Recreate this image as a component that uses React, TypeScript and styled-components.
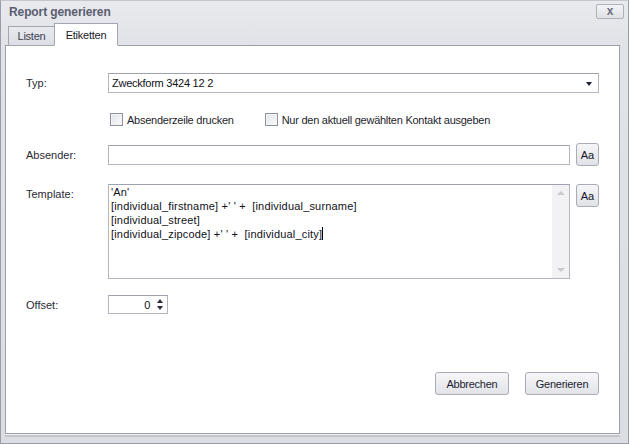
import React from 'react';
import styled, { createGlobalStyle } from 'styled-components';

const GlobalStyle = createGlobalStyle`
  html, body {
    margin: 0;
    padding: 0;
    background: #ffffff;
  }
  body {
    font-family: 'Liberation Sans', Arial, sans-serif;
    font-size: 11px;
    letter-spacing: -0.25px;
    color: #1e1e2a;
  }
`;

const Window = styled.div`
  width: 629px;
  height: 444px;
  box-sizing: border-box;
  display: flex;
  flex-direction: column;
  background: linear-gradient(#e9eaee, #e2e3e8 40px, #dcdde3);
  border: 1px solid #9a9da9;
  border-top-color: #c4c6cf;
  padding: 0 8px 9px 4px;
`;

const TitleBar = styled.div`
  height: 22px;
  display: flex;
  align-items: center;
  justify-content: space-between;
  padding-left: 4px;
  margin-right: -4px;
`;

const Title = styled.div`
  font-weight: bold;
  font-size: 12px;
  letter-spacing: -0.1px;
  color: #5a5d70;
`;

const CloseButton = styled.div`
  width: 26px;
  height: 13px;
  margin-top: -2px;
  border: 1px solid #aeb1bc;
  border-radius: 2px;
  background: linear-gradient(#f3f4f7, #dfe1e6);
  display: flex;
  align-items: center;
  justify-content: center;
  color: #6c6f7e;
  font-size: 12px;
  font-weight: bold;
  line-height: 1;
`;

const TabStrip = styled.div`
  display: flex;
  align-items: flex-end;
  height: 23px;
  padding-left: 3px;
  margin-bottom: -1px;
  position: relative;
  z-index: 1;
`;

const Tab = styled.div<{ $active?: boolean }>`
  box-sizing: border-box;
  height: ${(p) => (p.$active ? '23px' : '20px')};
  width: ${(p) => (p.$active ? '64px' : '47px')};
  margin-left: ${(p) => (p.$active ? '-1px' : '0')};
  display: flex;
  align-items: center;
  justify-content: center;
  background: ${(p) => (p.$active ? '#ffffff' : 'linear-gradient(#e9eaee, #dcdee4)')};
  border: 1px solid #a3a6b2;
  border-bottom-color: ${(p) => (p.$active ? '#ffffff' : '#a3a6b2')};
  color: ${(p) => (p.$active ? '#1b1b2b' : '#3a3d50')};
`;

const Panel = styled.div`
  flex: 1;
  background: #ffffff;
  border: 1px solid #9c9fab;
  box-shadow: 0 1px 0 #f0f0f3, 0 3px 0 #c2c4cd;
  display: flex;
  flex-direction: column;
  padding: 27px 20px 0 20px;
  box-sizing: border-box;
`;

const Row = styled.div<{ $gap?: number }>`
  display: flex;
  align-items: flex-start;
  margin-top: ${(p) => p.$gap ?? 0}px;
`;

const Label = styled.div<{ $h?: number }>`
  width: 82px;
  flex-shrink: 0;
  height: ${(p) => p.$h ?? 20}px;
  line-height: ${(p) => p.$h ?? 20}px;
  color: #2a2a36;
  letter-spacing: 0;
`;

const Input = styled.div<{ $w: number; $h?: number }>`
  box-sizing: border-box;
  width: ${(p) => p.$w}px;
  height: ${(p) => p.$h ?? 20}px;
  border: 1px solid #b4b7c2;
  border-top-color: #9fa2ae;
  background: #ffffff;
  display: flex;
  align-items: center;
  position: relative;
  padding-left: 3px;
  color: #111118;
`;

const DropArrow = styled.div`
  position: absolute;
  right: 6px;
  top: 8px;
  width: 0;
  height: 0;
  border-left: 3.5px solid transparent;
  border-right: 3.5px solid transparent;
  border-top: 4px solid #1d1f33;
`;

const CheckGroup = styled.div<{ $gapAfter?: number }>`
  display: flex;
  align-items: center;
  height: 13px;
  gap: 4px;
  margin-left: 2px;
  margin-right: ${(p) => p.$gapAfter ?? 0}px;
`;

const Box = styled.div`
  box-sizing: border-box;
  width: 13px;
  height: 13px;
  border: 1px solid #8e919e;
  background: linear-gradient(135deg, #e2e3e8, #fbfbfc);
  box-shadow: inset 0 0 0 1px #f4f4f6;
`;

const SmallButton = styled.div<{ $top?: number }>`
  box-sizing: border-box;
  width: 23px;
  height: 23px;
  margin-left: 6px;
  margin-top: ${(p) => p.$top ?? 0}px;
  border: 1px solid #a9acb7;
  border-radius: 3px;
  background: linear-gradient(#f6f6f8, #e1e2e7);
  display: flex;
  align-items: center;
  justify-content: center;
  color: #14152a;
  font-size: 11px;
  letter-spacing: 0;
`;

const TextArea = styled.div`
  box-sizing: border-box;
  width: 462px;
  height: 95px;
  border: 1px solid #b4b7c2;
  border-top-color: #9fa2ae;
  display: flex;
`;

const TextLines = styled.div`
  flex: 1;
  padding: 0 0 0 2px;
  line-height: 14px;
  letter-spacing: 0.18px;
  color: #111118;
  white-space: pre;
`;

const Caret = styled.span`
  display: inline-block;
  width: 1px;
  height: 13px;
  background: #000;
  vertical-align: -2px;
`;

const ScrollBar = styled.div`
  width: 17px;
  background: #f2f2f5;
  display: flex;
  flex-direction: column;
  justify-content: space-between;
  align-items: center;
  padding: 6px 0 6px;
`;

const ScrollArrow = styled.div<{ $up?: boolean }>`
  width: 0;
  height: 0;
  border-left: 4px solid transparent;
  border-right: 4px solid transparent;
  ${(p) => (p.$up ? 'border-bottom: 4px solid #c9cad2;' : 'border-top: 4px solid #c9cad2;')}
`;

const SpinBox = styled.div`
  box-sizing: border-box;
  width: 60px;
  height: 19px;
  border: 1px solid #b4b7c2;
  border-top-color: #9fa2ae;
  display: flex;
  align-items: center;
  justify-content: flex-end;
  padding-right: 4px;
  gap: 7px;
  color: #111118;
`;

const SpinArrows = styled.div`
  display: flex;
  flex-direction: column;
  gap: 3px;
`;

const SpinArrow = styled.div<{ $up?: boolean }>`
  width: 0;
  height: 0;
  border-left: 3.5px solid transparent;
  border-right: 3.5px solid transparent;
  ${(p) => (p.$up ? 'border-bottom: 4px solid #2a2c3c;' : 'border-top: 4px solid #2a2c3c;')}
`;

const Footer = styled.div`
  margin-top: auto;
  margin-bottom: 38px;
  display: flex;
  justify-content: flex-end;
  gap: 16px;
`;

const Button = styled.div`
  box-sizing: border-box;
  width: 74px;
  height: 23px;
  border: 1px solid #a9acb7;
  border-radius: 3px;
  background: linear-gradient(#f7f7f9, #e2e3e8);
  display: flex;
  align-items: center;
  justify-content: center;
  color: #1c1d30;
`;

const templateLines = [
  "'An'",
  "[individual_firstname] +' ' +  [individual_surname]",
  '[individual_street]',
];

export default function App() {
  return (
    <>
      <GlobalStyle />
      <Window>
        <TitleBar>
          <Title>Report generieren</Title>
          <CloseButton>x</CloseButton>
        </TitleBar>
        <TabStrip>
          <Tab>Listen</Tab>
          <Tab $active>Etiketten</Tab>
        </TabStrip>
        <Panel>
          <Row>
            <Label>Typ:</Label>
            <Input $w={492}>
              Zweckform 3424 12 2
              <DropArrow />
            </Input>
          </Row>
          <Row $gap={20}>
            <Label $h={13} />
            <CheckGroup $gapAfter={29}>
              <Box />
              <span>Absenderzeile drucken</span>
            </CheckGroup>
            <CheckGroup>
              <Box />
              <span>Nur den aktuell gewählten Kontakt ausgeben</span>
            </CheckGroup>
          </Row>
          <Row $gap={19}>
            <Label>Absender:</Label>
            <Input $w={462} />
            <SmallButton $top={-2}>Aa</SmallButton>
          </Row>
          <Row $gap={18}>
            <Label>Template:</Label>
            <TextArea>
              <TextLines>
                {templateLines.map((l) => (
                  <div key={l}>{l}</div>
                ))}
                <div>
                  [individual_zipcode] +' ' +  [individual_city]
                  <Caret />
                </div>
              </TextLines>
              <ScrollBar>
                <ScrollArrow $up />
                <ScrollArrow />
              </ScrollBar>
            </TextArea>
            <SmallButton>Aa</SmallButton>
          </Row>
          <Row $gap={16}>
            <Label>Offset:</Label>
            <SpinBox>
              <span>0</span>
              <SpinArrows>
                <SpinArrow $up />
                <SpinArrow />
              </SpinArrows>
            </SpinBox>
          </Row>
          <Footer>
            <Button>Abbrechen</Button>
            <Button>Generieren</Button>
          </Footer>
        </Panel>
      </Window>
    </>
  );
}
